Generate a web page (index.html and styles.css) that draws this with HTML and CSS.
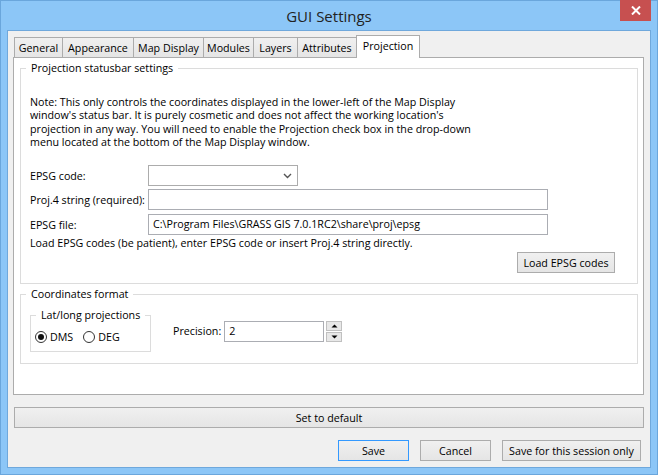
FILE: index.html
```html
<!DOCTYPE html>
<html>
<head>
<meta charset="utf-8">
<link rel="stylesheet" href="styles.css">
</head>
<body>
<div class="window">
  <div class="titlebar">
    <span class="title">GUI Settings</span>
    <div class="close"><svg width="10" height="9" viewBox="0 0 10 9"><path d="M1 0.5 L9 8.5 M9 0.5 L1 8.5" stroke="#fff" stroke-width="2"/></svg></div>
  </div>
  <div class="client">
    <div class="tabs">
      <div class="tab t-general">General</div>
      <div class="tab t-appearance">Appearance</div>
      <div class="tab t-map">Map Display</div>
      <div class="tab t-modules">Modules</div>
      <div class="tab t-layers">Layers</div>
      <div class="tab t-attr">Attributes</div>
      <div class="tab selected t-proj">Projection</div>
    </div>
    <div class="panel">
      <fieldset class="group group-proj">
        <legend>Projection statusbar settings</legend>
        <p class="note">Note: This only controls the coordinates displayed in the lower-left of the Map Display<br>window's status bar. It is purely cosmetic and does not affect the working location's<br>projection in any way. You will need to enable the Projection check box in the drop-down<br>menu located at the bottom of the Map Display window.</p>
        <div class="row row-first">
          <span class="label">EPSG code:</span>
          <div class="combo"><svg width="9" height="6" viewBox="0 0 9 6"><path d="M1 1 L4.5 4.5 L8 1" stroke="#555" stroke-width="1.4" fill="none"/></svg></div>
        </div>
        <div class="row">
          <span class="label">Proj.4 string (required):</span>
          <div class="input wide"></div>
        </div>
        <div class="row row-last">
          <span class="label">EPSG file:</span>
          <div class="input wide">C:\Program Files\GRASS GIS 7.0.1RC2\share\proj\epsg</div>
        </div>
        <p class="hint">Load EPSG codes (be patient), enter EPSG code or insert Proj.4 string directly.</p>
        <div class="load-row"><div class="btn load">Load EPSG codes</div></div>
      </fieldset>
      <fieldset class="group group-coords">
        <legend>Coordinates format</legend>
        <div class="coords">
          <fieldset class="latlong">
            <legend>Lat/long projections</legend>
            <div class="radios">
              <span class="radio checked"></span><span class="rlabel">DMS</span>
              <span class="radio"></span><span class="rlabel">DEG</span>
            </div>
          </fieldset>
          <span class="plabel">Precision:</span>
          <div class="input prec">2</div>
          <div class="spin">
            <div class="spinbtn"><svg width="7" height="4" viewBox="0 0 7 4"><path d="M0.5 3.5 L3.5 0.5 L6.5 3.5 Z" fill="#000"/></svg></div>
            <div class="spinbtn"><svg width="7" height="4" viewBox="0 0 7 4"><path d="M0.5 0.5 L3.5 3.5 L6.5 0.5 Z" fill="#000"/></svg></div>
          </div>
        </div>
      </fieldset>
    </div>
    <div class="btn default">Set to default</div>
    <div class="actions">
      <div class="btn action focused">Save</div>
      <div class="btn action">Cancel</div>
      <div class="btn action session">Save for this session only</div>
    </div>
  </div>
</div>
</body>
</html>
```
FILE: styles.css
```css
html, body {
  margin: 0;
  padding: 0;
}
body {
  width: 658px;
  height: 475px;
  overflow: hidden;
  background: #8cc6f7;
  font-family: "Open Sans", "Noto Sans", sans-serif;
  font-size: 10.7px;
  color: #000;
  white-space: nowrap;
}
.window {
  box-sizing: border-box;
  width: 658px;
  height: 475px;
  border: 1px solid #6aa6dc;
  display: flex;
  flex-direction: column;
  position: relative;
}
.titlebar {
  height: 29px;
  display: flex;
  align-items: center;
  justify-content: center;
}
.title {
  font-size: 15px;
  color: #222;
  margin-top: 1px;
}
.close {
  position: absolute;
  top: -1px;
  right: 6px;
  width: 31px;
  height: 21px;
  background: #c75050;
  display: flex;
  align-items: center;
  justify-content: center;
}
.client {
  margin: 0 6px 6px 6px;
  border: 1px solid #6fa8dc;
  background: #f0f0f0;
  height: 436px;
  display: flex;
  flex-direction: column;
}
.tabs {
  height: 26px;
  display: flex;
  align-items: flex-end;
  padding-left: 6px;
}
.tab {
  box-sizing: border-box;
  height: 20px;
  border: 1px solid #acacac;
  border-bottom: none;
  margin-left: -1px;
  background: linear-gradient(#f0f0f0, #e5e5e5);
  display: flex;
  align-items: center;
  justify-content: center;
  line-height: 16px;
}
.tab:first-child {
  margin-left: 0;
}
.t-general { width: 49px; }
.t-appearance { width: 72px; }
.t-map { width: 71px; }
.t-modules { width: 51px; }
.t-layers { width: 45px; }
.t-attr { width: 60px; }
.t-proj { width: 64px; }
.tab.selected {
  height: 23px;
  margin-bottom: -1px;
  background: #fff;
  position: relative;
  z-index: 1;
  align-items: flex-start;
  padding-top: 2px;
}
.panel {
  box-sizing: border-box;
  height: 338px;
  margin: 0 6px 0 5px;
  border: 1px solid #acacac;
  background: #fff;
  padding: 3px 5px 0 6px;
}
.group {
  margin: 0;
  border: 1px solid #dcdcdc;
  padding: 0 9px;
  min-width: 0;
}
.group legend {
  padding: 0 5px;
  margin-left: -4px;
  line-height: 14px;
}
.group-proj {
  height: 223px;
  box-sizing: border-box;
}
.note {
  margin: 21px 0 0 0;
  line-height: 13.3px;
}
.row {
  display: flex;
  align-items: center;
  margin-top: 3px;
}
.row-first {
  margin-top: 16px;
}
.row-last {
  margin-top: 4px;
}
.label {
  width: 118px;
}
.combo {
  box-sizing: border-box;
  width: 150px;
  height: 21px;
  border: 1px solid #acacac;
  background: #fff;
  display: flex;
  align-items: center;
  justify-content: flex-end;
  padding-right: 5px;
}
.input {
  box-sizing: border-box;
  height: 21px;
  border: 1px solid #abadb3;
  background: #fff;
  padding: 0 4px;
  line-height: 19px;
}
.wide {
  width: 400px;
}
.hint {
  margin: 0;
  line-height: 16px;
}
.load-row {
  display: flex;
  justify-content: flex-end;
  margin-top: 1px;
  padding-right: 13px;
}
.btn {
  box-sizing: border-box;
  height: 21px;
  border: 1px solid #acacac;
  background: linear-gradient(#f0f0f0, #e5e5e5);
  display: flex;
  align-items: center;
  justify-content: center;
  line-height: 16px;
}
.load {
  width: 98px;
}
.group-coords {
  margin-top: 3px;
  height: 77px;
  box-sizing: border-box;
}
.coords {
  display: flex;
  align-items: flex-start;
  margin-top: 7px;
}
.latlong {
  margin: 0;
  width: 121px;
  height: 44px;
  box-sizing: border-box;
  border: 1px solid #dcdcdc;
  padding: 0 4px;
  min-width: 0;
}
.latlong legend {
  padding: 0 5px;
  margin-left: 1px;
  line-height: 14px;
}
.radios {
  display: flex;
  align-items: center;
  margin-top: 8px;
}
.radio {
  box-sizing: border-box;
  width: 12px;
  height: 12px;
  border: 1px solid #333;
  border-radius: 50%;
  background: #fff;
  display: flex;
  align-items: center;
  justify-content: center;
}
.radio.checked::after {
  content: "";
  width: 6px;
  height: 6px;
  border-radius: 50%;
  background: #111;
}
.rlabel {
  margin-left: 3px;
  margin-right: 10px;
}
.plabel {
  margin-left: 22px;
  margin-top: 16px;
}
.prec {
  width: 100px;
  margin-left: 3px;
  margin-top: 13px;
}
.spin {
  margin-left: 2px;
  margin-top: 13px;
  display: flex;
  flex-direction: column;
  gap: 1px;
}
.spinbtn {
  box-sizing: border-box;
  width: 16px;
  height: 10px;
  border: 1px solid #c0c0c0;
  background: #e8e8e8;
  display: flex;
  align-items: center;
  justify-content: center;
}
.default {
  margin: 12px 6px 0 6px;
}
.actions {
  display: flex;
  justify-content: flex-end;
  gap: 11px;
  margin-top: 12px;
  padding-right: 9px;
}
.action {
  width: 71px;
}
.action.focused {
  border-color: #3399ff;
}
.action.session {
  width: 139px;
}
```
